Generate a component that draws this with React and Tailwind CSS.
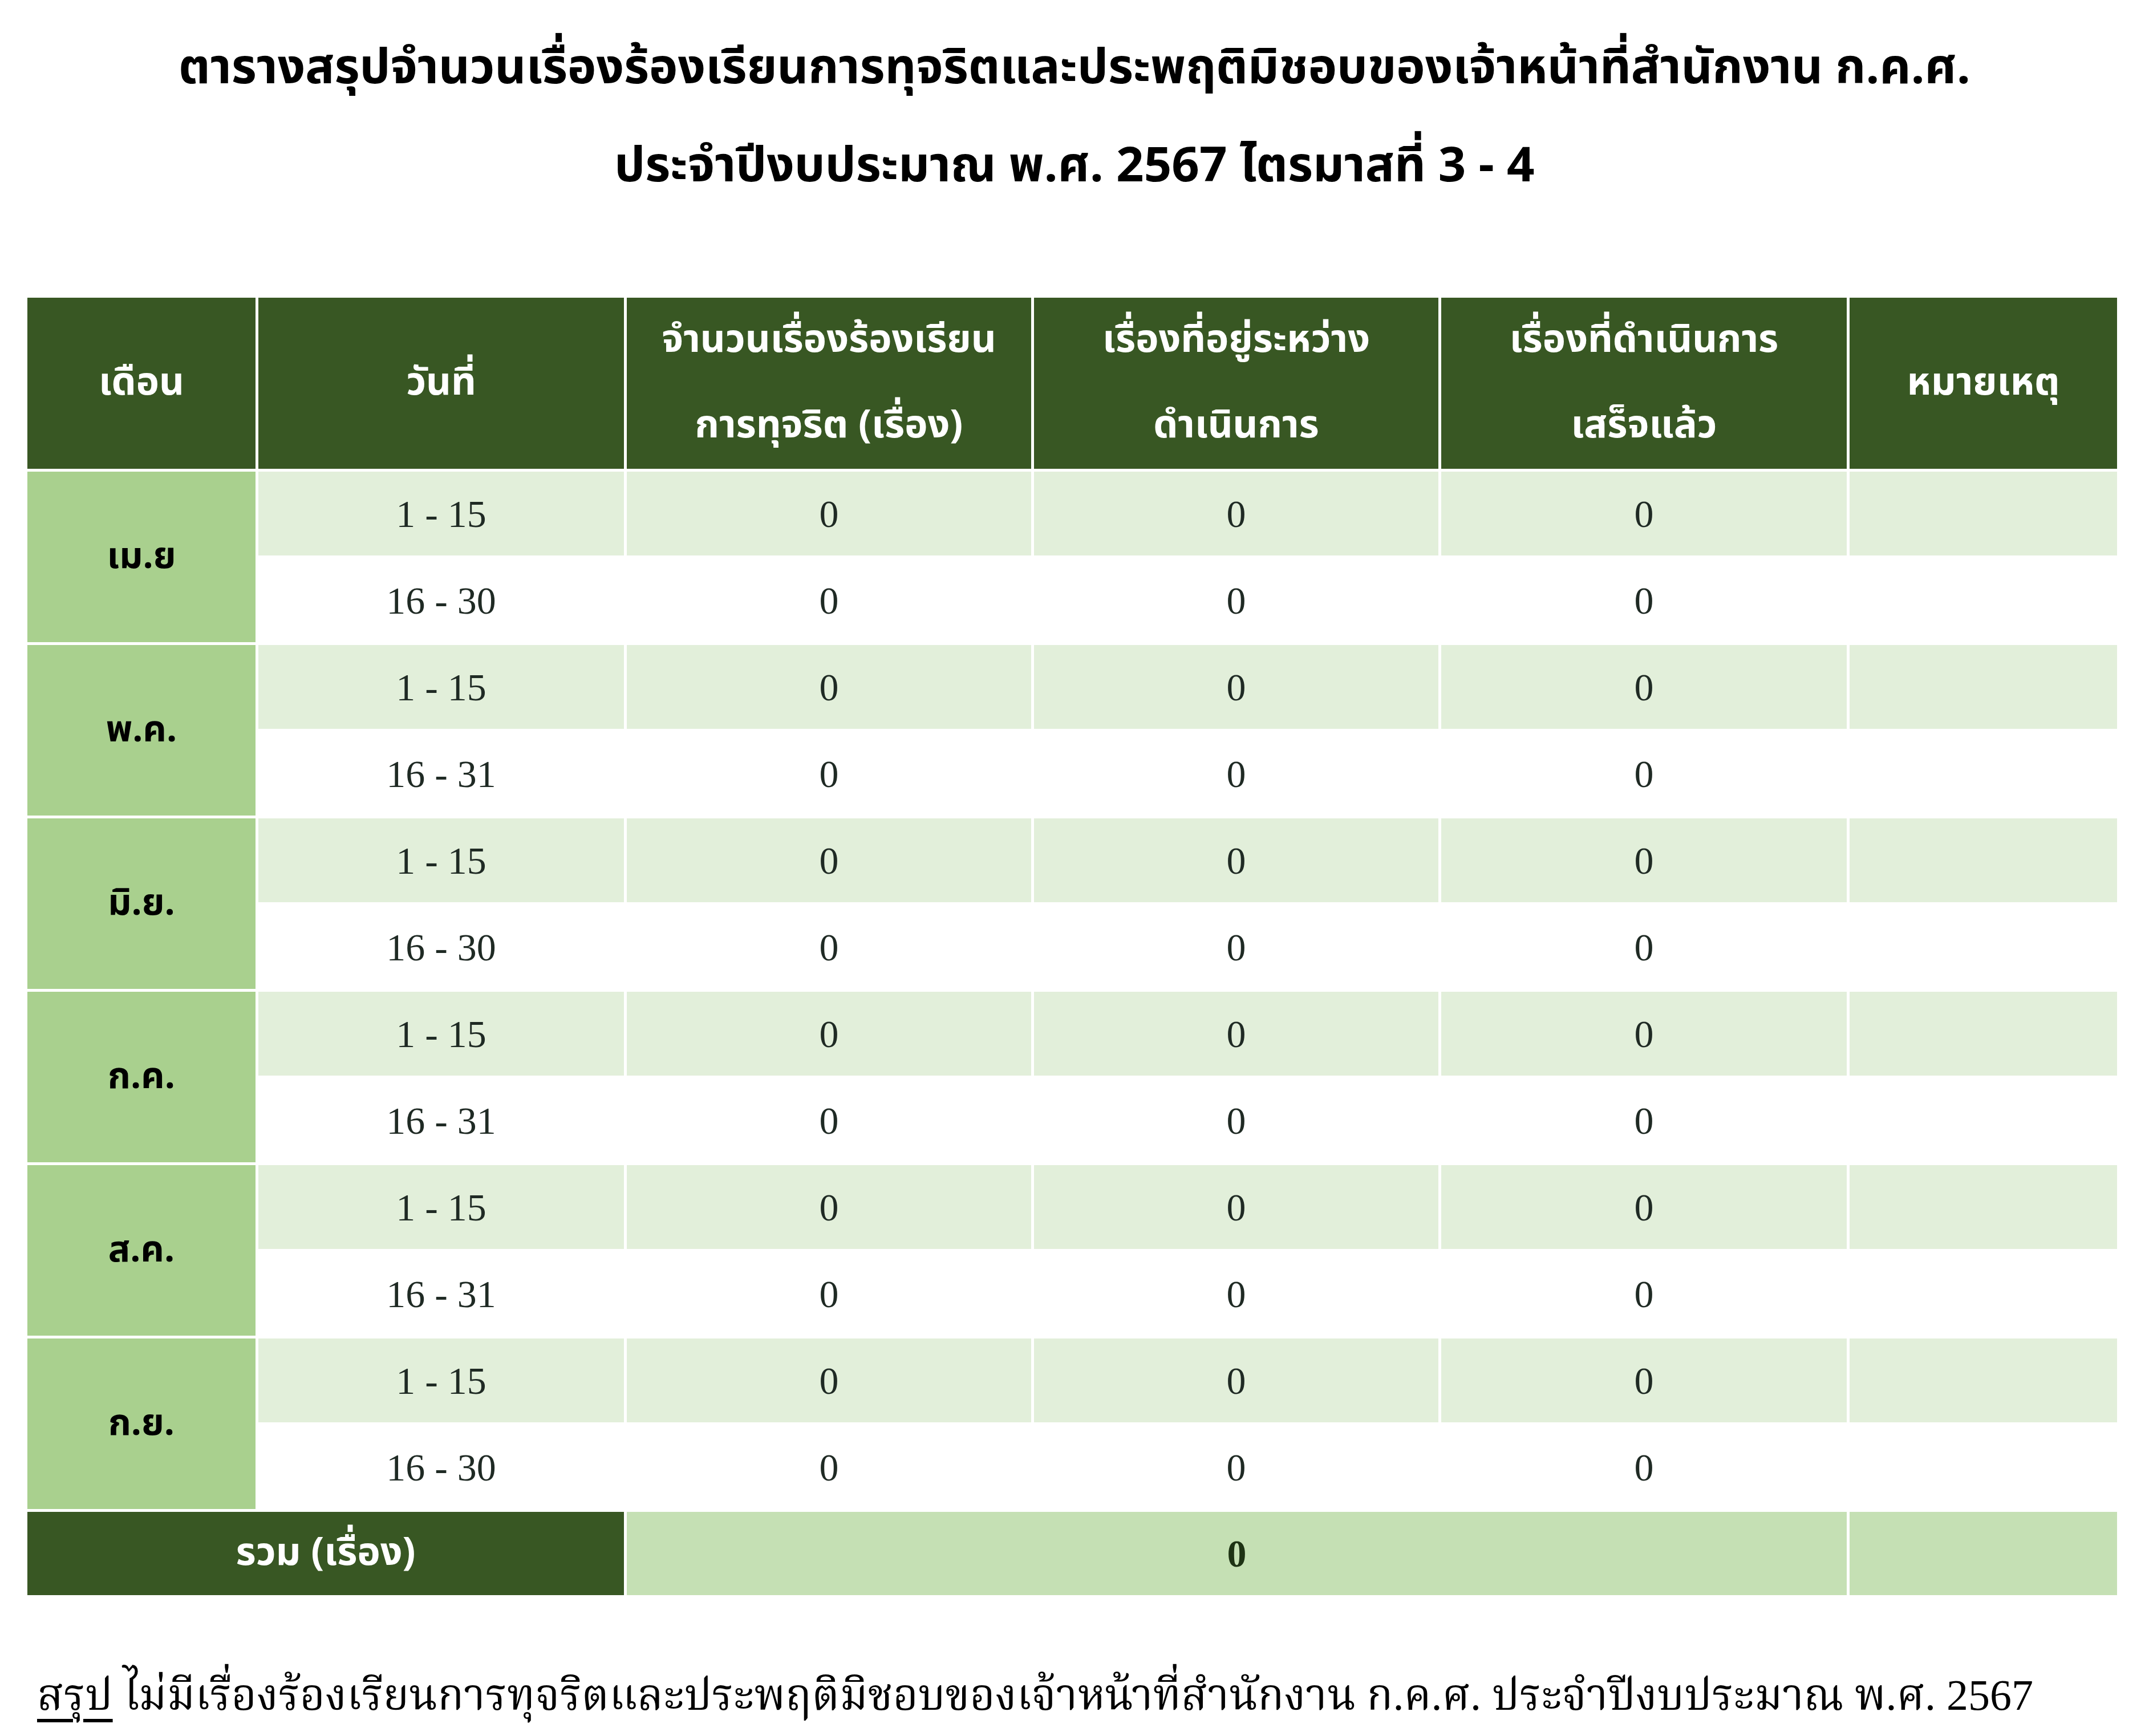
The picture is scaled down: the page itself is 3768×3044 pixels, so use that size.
import React from 'react';

const months = [
  { name: 'เม.ย', ranges: ['1 - 15', '16 - 30'] },
  { name: 'พ.ค.', ranges: ['1 - 15', '16 - 31'] },
  { name: 'มิ.ย.', ranges: ['1 - 15', '16 - 30'] },
  { name: 'ก.ค.', ranges: ['1 - 15', '16 - 31'] },
  { name: 'ส.ค.', ranges: ['1 - 15', '16 - 31'] },
  { name: 'ก.ย.', ranges: ['1 - 15', '16 - 30'] },
];

const headers = [
  ['เดือน'],
  ['วันที่'],
  ['จำนวนเรื่องร้องเรียน', 'การทุจริต (เรื่อง)'],
  ['เรื่องที่อยู่ระหว่าง', 'ดำเนินการ'],
  ['เรื่องที่ดำเนินการ', 'เสร็จแล้ว'],
  ['หมายเหตุ'],
];

const thai = "font-['Noto_Sans_Thai','Noto_Sans','DejaVu_Sans',sans-serif]";
const serif = "font-['Liberation_Serif','Noto_Serif_Thai','DejaVu_Serif',serif]";

export default function App() {
  return (
    <div className="w-[3768px] h-[3044px] bg-white overflow-hidden">
      {/* Title */}
      <div className={`pt-[34px] text-center font-bold text-black text-[85px] leading-[172px] ${thai}`}>
        <div>ตารางสรุปจำนวนเรื่องร้องเรียนการทุจริตและประพฤติมิชอบของเจ้าหน้าที่สำนักงาน ก.ค.ศ.</div>
        <div>ประจำปีงบประมาณ พ.ศ. 2567 ไตรมาสที่ 3 - 4</div>
      </div>

      {/* Table */}
      <div className="mt-[144px] ml-[48px] grid grid-cols-[400px_641px_709px_709px_711px_469px] grid-rows-[300px_repeat(12,147px)_146px] gap-[5px]">
        {headers.map((lines, i) => (
          <div key={i} className={`bg-[#385723] text-white font-bold text-[68px] leading-[150px] flex flex-col items-center justify-center ${thai}`}>
            {lines.map((l) => (
              <span key={l}>{l}</span>
            ))}
          </div>
        ))}

        {months.map((m) => (
          <React.Fragment key={m.name}>
            <div className={`row-span-2 bg-[#a9d08e] flex items-center justify-center font-bold text-black text-[64px] ${thai}`}>
              {m.name}
            </div>
            {m.ranges.map((r, ri) => {
              const bg = ri === 0 ? 'bg-[#e2efda]' : 'bg-white';
              return (
                <React.Fragment key={r}>
                  <div className={`${bg} flex items-center justify-center text-[68px] text-[#1f2a24] ${serif}`}>{r}</div>
                  <div className={`${bg} flex items-center justify-center text-[68px] text-[#1f2a24] ${serif}`}>0</div>
                  <div className={`${bg} flex items-center justify-center text-[68px] text-[#1f2a24] ${serif}`}>0</div>
                  <div className={`${bg} flex items-center justify-center text-[68px] text-[#1f2a24] ${serif}`}>0</div>
                  <div className={bg}></div>
                </React.Fragment>
              );
            })}
          </React.Fragment>
        ))}

        <div className={`col-span-2 bg-[#385723] text-white font-bold text-[68px] flex items-center justify-center ${thai}`}>
          รวม (เรื่อง)
        </div>
        <div className={`col-span-3 bg-[#c5e0b4] flex items-center justify-center font-bold text-[68px] text-[#1e3314] ${serif}`}>
          0
        </div>
        <div className="bg-[#c5e0b4]"></div>
      </div>

      {/* Summary */}
      <p className={`mt-[118px] ml-[65px] text-[76px] text-black ${serif}`}>
        <span className="underline underline-offset-[16px] decoration-[6px]">สรุป</span> ไม่มีเรื่องร้องเรียนการทุจริตและประพฤติมิชอบของเจ้าหน้าที่สำนักงาน ก.ค.ศ. ประจำปีงบประมาณ พ.ศ. 2567
      </p>
    </div>
  );
}
